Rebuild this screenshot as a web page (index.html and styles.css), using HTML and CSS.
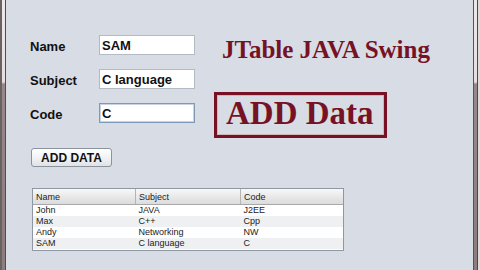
FILE: index.html
```html
<!DOCTYPE html>
<html>
<head>
  <title>JTable JAVA Swing</title>
  <link rel="stylesheet" href="styles.css">
</head>
<body>
  <div class="screen">
    <div class="edge edge-left"></div>
    <div class="window">
      <div class="top-row">
        <div class="form-grid">
          <label class="field-label" for="name">Name</label>
          <input class="field" type="text" id="name" value="SAM">
          <label class="field-label" for="subject">Subject</label>
          <input class="field" type="text" id="subject" value="C language">
          <label class="field-label" for="code">Code</label>
          <input class="field field-focus" type="text" id="code" value="C">
        </div>
        <div class="banner">
          <h1 class="banner-title">JTable JAVA Swing</h1>
          <div class="banner-box">ADD Data</div>
        </div>
      </div>
      <button class="add-btn">ADD DATA</button>
      <div class="table-wrap">
        <table class="data-table">
          <thead>
            <tr>
              <th>Name</th>
              <th>Subject</th>
              <th>Code</th>
            </tr>
          </thead>
          <tbody>
            <tr><td>John</td><td>JAVA</td><td>J2EE</td></tr>
            <tr><td>Max</td><td>C++</td><td>Cpp</td></tr>
            <tr><td>Andy</td><td>Networking</td><td>NW</td></tr>
            <tr><td>SAM</td><td>C language</td><td>C</td></tr>
          </tbody>
        </table>
      </div>
    </div>
    <div class="edge edge-right"></div>
    <div class="outside"></div>
  </div>
</body>
</html>
```
FILE: styles.css
```css
body {
  margin: 0;
  font-family: "Liberation Sans", Arial, sans-serif;
}

.screen {
  display: flex;
  width: 480px;
  height: 270px;
  overflow: hidden;
  background-color: #d8dce4;
}

.edge {
  flex: none;
  box-sizing: border-box;
  background: linear-gradient(to bottom, #eee8e6 0, #e6dedc 82px, #98888a 84px, #8c7c7c 100%);
}

.edge-left {
  width: 6px;
  border-left: 2px solid #6a6262;
  border-right: 1px solid #544c4c;
}

.edge-right {
  width: 5px;
  border-left: 1px solid #5a5252;
  border-right: 1px solid #4e4646;
}

.outside {
  width: 2px;
  flex: none;
  background-color: #dcdcdc;
}

.window {
  flex: 1;
  padding: 35px 0 0 24px;
}

.top-row {
  display: flex;
  align-items: flex-start;
}

.form-grid {
  display: grid;
  grid-template-columns: 69px 96px;
  row-gap: 14px;
  align-items: center;
}

.field-label {
  font-size: 13px;
  font-weight: bold;
  color: #111;
  padding-top: 3px;
}

.field {
  box-sizing: border-box;
  width: 96px;
  height: 20px;
  margin: 0;
  padding: 0 2px;
  border: 1px solid #b4bac4;
  background-color: #fff;
  font-family: "Liberation Sans", Arial, sans-serif;
  font-size: 13px;
  font-weight: bold;
  color: #111;
  outline: none;
}

.field-focus {
  border-color: #7f98b6;
  box-shadow: inset 0 0 0 1px #c8d4e4;
}

.banner {
  margin: 2px 0 0 19px;
}

.banner-title {
  margin: 0 0 29px 8px;
  font-family: "Liberation Serif", "Times New Roman", serif;
  font-size: 25px;
  line-height: 26px;
  font-weight: bold;
  color: #761224;
}

.banner-box {
  display: inline-block;
  padding: 0 10px 4px 9px;
  border: 3px solid #761224;
  box-shadow: inset 0 0 0 1px #d4b4bc;
  font-family: "Liberation Serif", "Times New Roman", serif;
  font-size: 33px;
  line-height: 36px;
  font-weight: bold;
  color: #761224;
}

.add-btn {
  display: block;
  box-sizing: border-box;
  width: 81px;
  height: 19px;
  margin: 10px 0 0 1px;
  padding: 0;
  border: 1px solid #8c939c;
  border-radius: 3px;
  background: linear-gradient(to bottom, #ffffff, #f2f3f5 50%, #dfe2e6);
  font-family: "Liberation Sans", Arial, sans-serif;
  font-size: 12px;
  font-weight: bold;
  color: #111;
}

.table-wrap {
  box-sizing: border-box;
  width: 312px;
  height: 63px;
  margin: 21px 0 0 2px;
  border: 1px solid #8e98a4;
  background-color: #fff;
}

.data-table {
  width: 100%;
  border-collapse: collapse;
  table-layout: fixed;
  font-size: 9px;
  color: #222;
}

.data-table th {
  height: 15px;
  padding: 0 3px;
  text-align: left;
  font-weight: normal;
  background: linear-gradient(to bottom, #f8f8f8, #e6e6e6 60%, #dcdcdc);
  border-bottom: 1px solid #a8a8a8;
  border-right: 1px solid #b4b4b4;
}

.data-table th:nth-child(1) {
  width: 96px;
}

.data-table th:nth-child(2) {
  width: 98px;
}

.data-table th:last-child {
  border-right: none;
}

.data-table td {
  height: 11px;
  padding: 0 3px;
  line-height: 11px;
  white-space: nowrap;
}

.data-table tbody tr:nth-child(even) td {
  background-color: #eef0f2;
}
```
